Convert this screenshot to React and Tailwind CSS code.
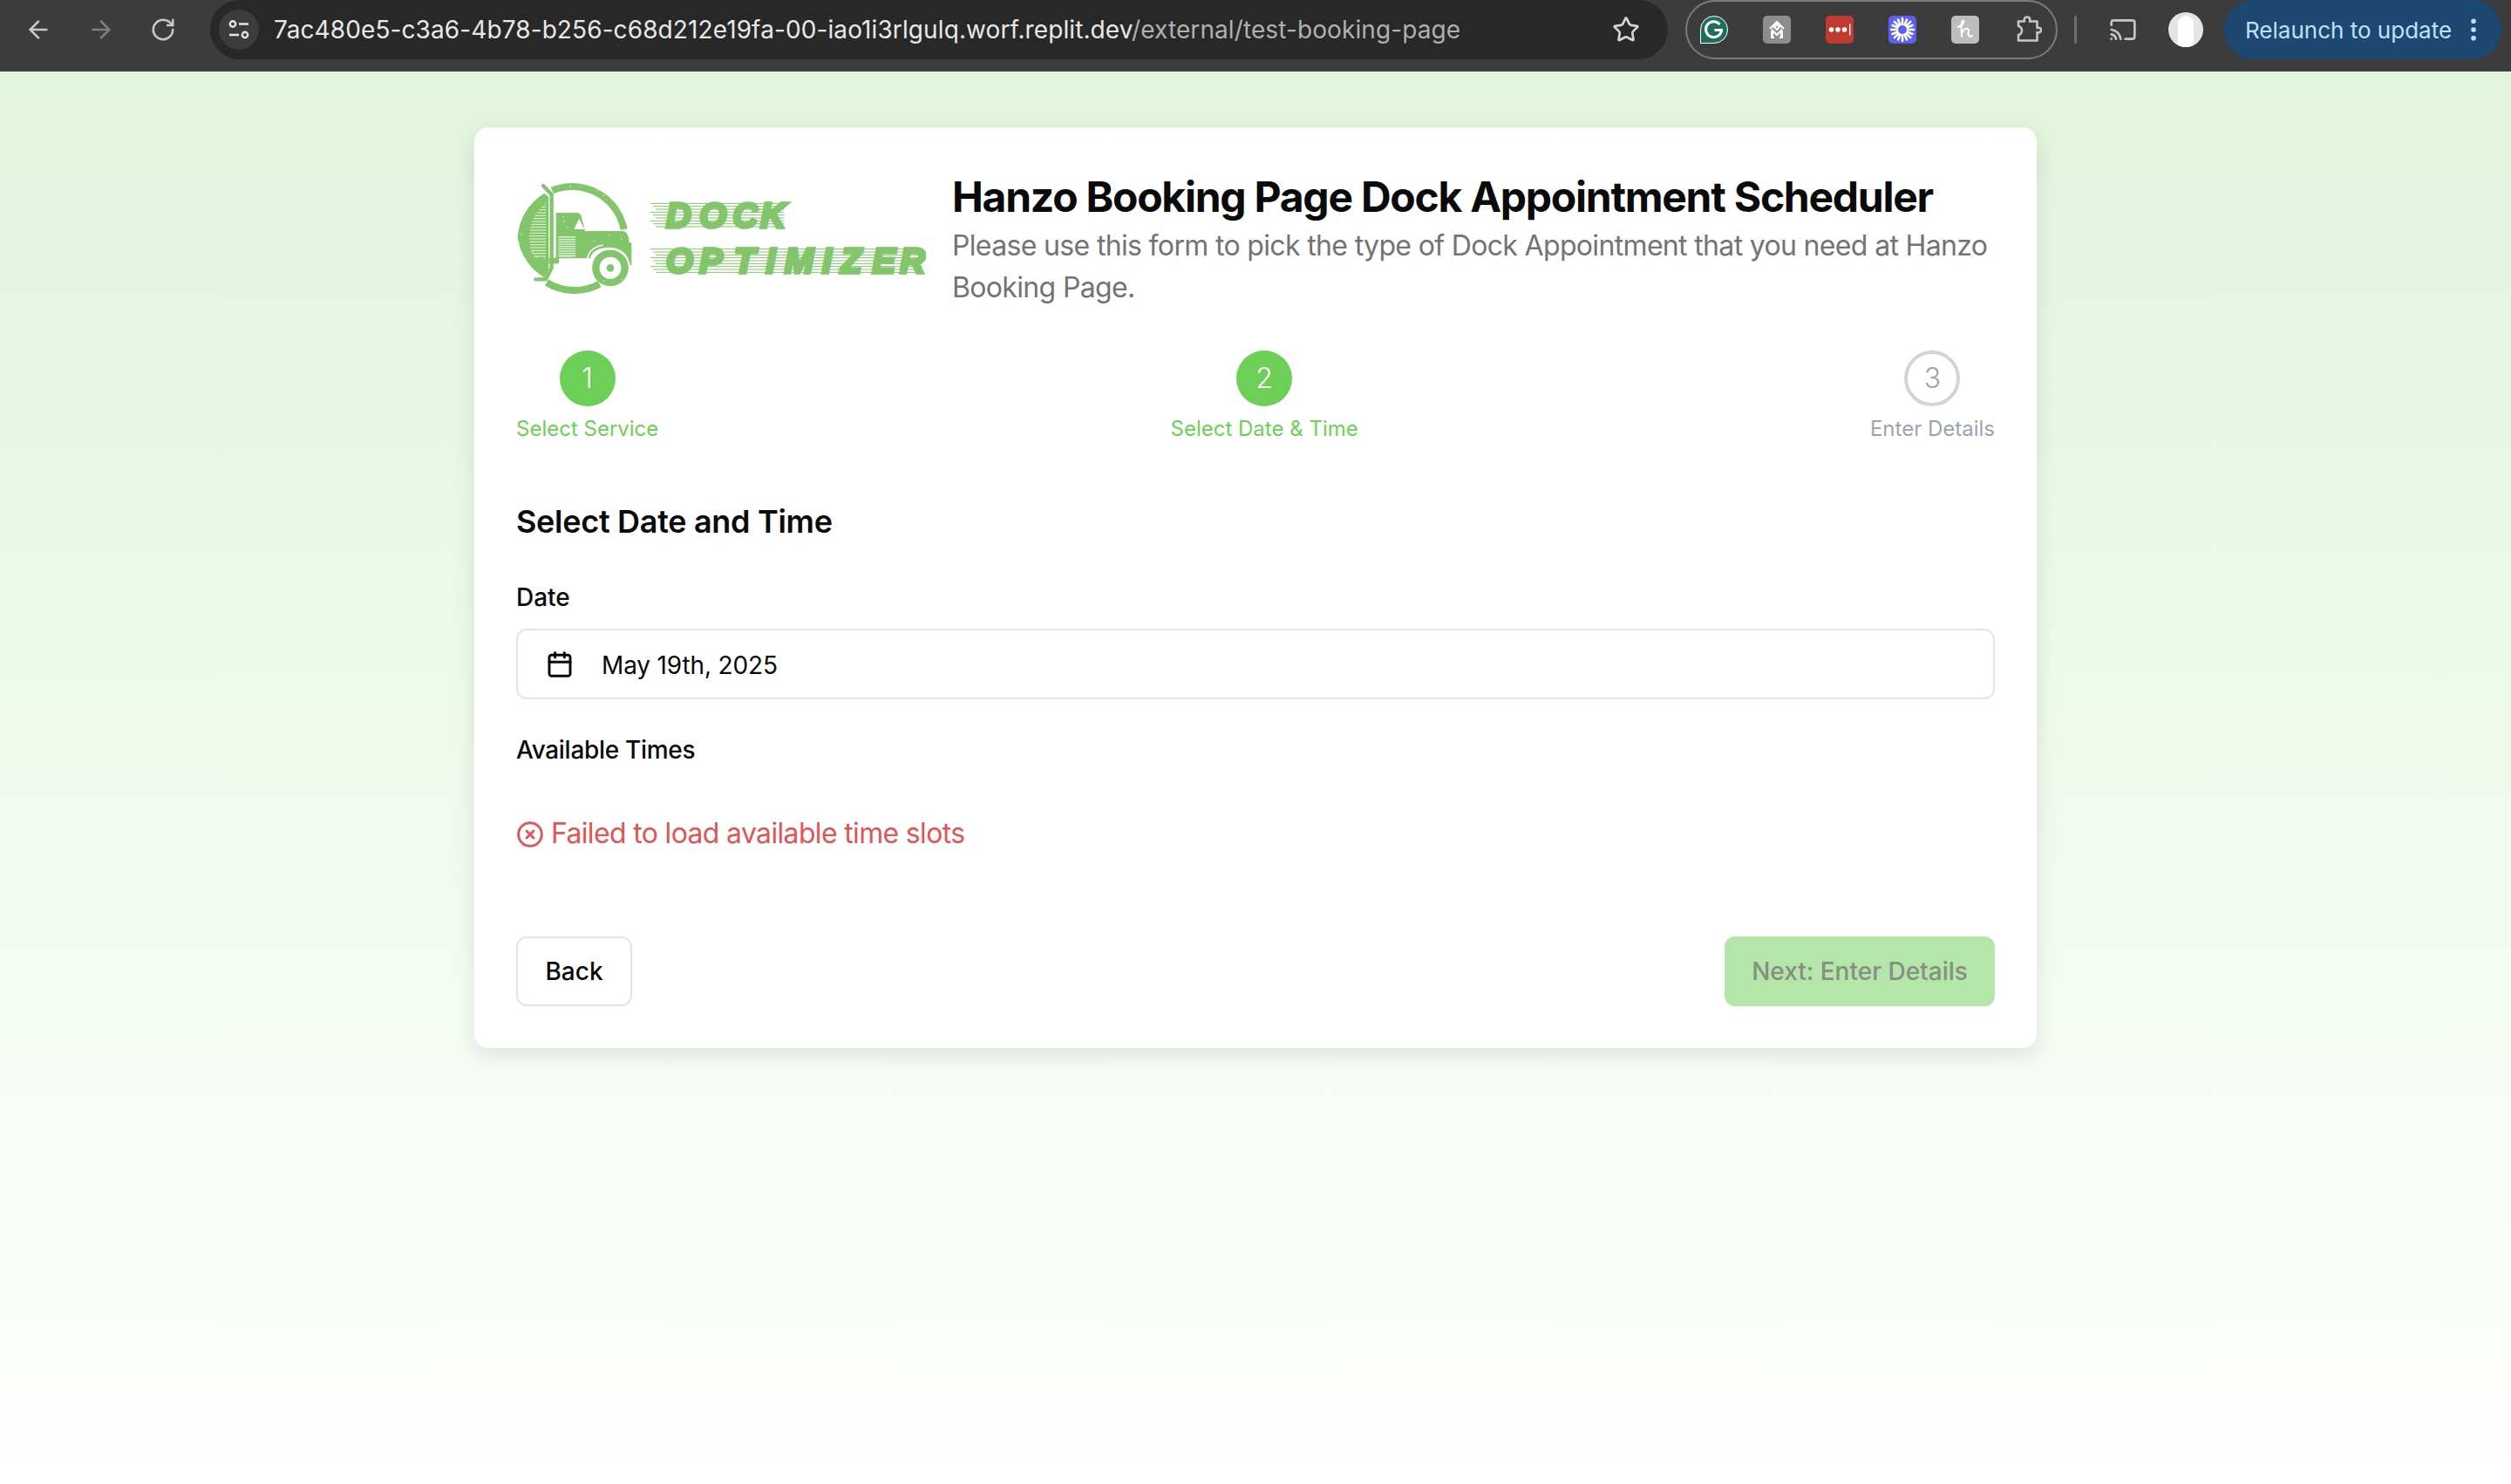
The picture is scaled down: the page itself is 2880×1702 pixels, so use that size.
import React from 'react';
import { ArrowLeft, ArrowRight, RotateCw, Star, Cast, Calendar, CircleX } from 'lucide-react';

const G = '#83c56a';

function Logo() {
  const dock = [578, 693, 808, 903];
  const opt = [578, 693, 812, 922, 986, 1115, 1178, 1288, 1383];
  const lines = [];
  for (let i = 0; i < 9; i++) {
    const ya = 133 + i * 10;
    const yb = 290 + i * 10;
    const o = (i % 3) * 9;
    lines.push(<path key={'a' + i} d={`M${525 + o} ${ya}H985`} stroke={G} strokeWidth="3" />);
    lines.push(<path key={'b' + i} d={`M${525 + o} ${yb}H1460`} stroke={G} strokeWidth="3" />);
  }
  const cuts = [];
  dock.forEach((x, k) => {
    for (let i = 0; i < 9; i += 1) cuts.push(<path key={`c${k}${i}`} d={`M${x - 6 - i} ${133 + i * 10 + 5}h${8 + (i % 2) * 6}`} stroke="#fff" strokeWidth="2" />);
  });
  opt.forEach((x, k) => {
    for (let i = 0; i < 9; i += 1) cuts.push(<path key={`d${k}${i}`} d={`M${x - 6 - i} ${290 + i * 10 + 5}h${8 + (i % 2) * 6}`} stroke="#fff" strokeWidth="2" />);
  });
  const bars = [];
  for (let y = 135; y < 320; y += 10) {
    const half = Math.sqrt(Math.max(0, 150 * 150 - (y - 250) * (y - 250)));
    bars.push(<path key={'l' + y} d={`M${Math.max(258 - half, 92)} ${y}H165`} stroke="#fff" strokeWidth="2.5" />);
  }
  const specks = [[250,75],[285,73],[345,88],[365,105],[96,322],[118,300],[135,318],[160,322],[228,195],[240,215],[330,262],[385,243],[425,255],[365,400],[425,395],[82,240],[75,270],[100,350],[225,180]];
  return (
    <svg viewBox="63 15 1410 480" className="w-[470px] h-[160px] shrink-0">
      <path d="M187 88A182 182 0 0 1 434 222" fill="none" stroke={G} strokeWidth="24" />
      <path d="M168 405A182 182 0 0 0 350 410" fill="none" stroke={G} strokeWidth="24" />
      <path d="M160 98A190 190 0 0 0 68 250A190 190 0 0 0 160 388L175 360V330H175V110Z" fill={G} />
      {bars}
      <path d="M156 72L185 102V355L165 394H130" fill="none" stroke={G} strokeWidth="13" strokeLinejoin="round" strokeLinecap="round" />
      <path d="M175 320H210V340H175Z" fill={G} />
      <path d="M200 165H272Q284 165 288 180L300 228H430Q450 230 452 268H460V345H455Q445 288 385 284Q325 286 318 322H200Z" fill={G} />
      <path d="M262 222L280 186L298 222Z" fill="#fff" />
      <path d="M209 247H266V316H209Z" fill="#fff" />
      <path d="M209 253H266M209 261H266M209 269H266M209 277H266M209 285H266M209 293H266M209 301H266M209 309H266" stroke={G} strokeWidth="5" />
      <path d="M308 328Q312 285 362 276" fill="none" stroke="#fff" strokeWidth="5" />
      <circle cx="387" cy="355" r="50" fill="#fff" stroke={G} strokeWidth="25" />
      <circle cx="387" cy="355" r="13" fill={G} />
      {specks.map(([x, y], i) => <circle key={i} cx={x} cy={y} r="2" fill="#fff" />)}
      {lines}
      <text x={dock.join(' ')} y="215" fill={G} stroke={G} strokeWidth="11" fontFamily="Liberation Sans, sans-serif" fontWeight="700" fontStyle="italic" fontSize="120">DOCK</text>
      <text x={opt.join(' ')} y="372" fill={G} stroke={G} strokeWidth="11" fontFamily="Liberation Sans, sans-serif" fontWeight="700" fontStyle="italic" fontSize="120">OPTIMIZER</text>
      {cuts}
    </svg>
  );
}

function Ext({ bg, children }) {
  return (
    <svg viewBox="0 0 32 32" className="w-8 h-8 shrink-0">
      <rect width="32" height="32" rx="5" fill={bg} />
      {children}
    </svg>
  );
}

function Chrome() {
  return (
    <div className="h-[82px] bg-[#3c3c3c] flex items-start text-[#c7c7c7] shrink-0">
      <div className="flex items-center w-[241px] h-[68px] pl-[28px] gap-[40px]">
        <ArrowLeft size={32} strokeWidth={2} />
        <ArrowRight size={32} strokeWidth={2} className="text-[#7f7f7f]" />
        <RotateCw size={30} strokeWidth={2} />
      </div>
      <div className="w-[1672px] h-[68px] rounded-[34px] bg-[#282828] flex items-center pl-[10px] pr-[32px]">
        <div className="w-[46px] h-[46px] rounded-full bg-[#3c3c3c] flex items-center justify-center">
          <svg viewBox="0 0 28 28" className="w-7 h-7" fill="none" stroke="#e3e3e3" strokeWidth="2.4">
            <circle cx="7" cy="7.5" r="3.2" />
            <path d="M14 7.5H25M3 20H14" />
            <circle cx="21" cy="20" r="3.2" />
          </svg>
        </div>
        <div className="ml-[17px] text-[28px] tracking-[0.1px] text-[#e8e8e8] whitespace-nowrap flex-1">7ac480e5-c3a6-4b78-b256-c68d212e19fa-00-iao1i3rlgulq.worf.replit.dev<span className="text-[#b0b0b0]">/external/test-booking-page</span></div>
        <Star size={32} strokeWidth={2} className="text-[#d5d5d5]" />
      </div>
      <div className="ml-[20px] w-[427px] h-[68px] rounded-[34px] border-2 border-[#7b7b7b] flex items-center justify-between pl-[15px] pr-[16px]">
        <svg viewBox="0 0 32 32" className="w-8 h-8 shrink-0">
          <path d="M16 0.5A15.5 15.5 0 0 1 16 31.5H0.5V16A15.5 15.5 0 0 1 16 0.5Z" fill="#1e6e5c" stroke="#fff" strokeWidth="1" />
          <path d="M22.5 10A9 9 0 1 0 24.5 16.5H16.5" fill="none" stroke="#fff" strokeWidth="3" />
        </svg>
        <Ext bg="#8d8d8d">
          <path d="M8 15L16 7L24 15M10 17V25H13M22 17V25H19M11 25V17L16 22L21 17V25M13 13L16 16L19 13L16 10Z" fill="none" stroke="#fff" strokeWidth="2" />
        </Ext>
        <Ext bg="#c13a30">
          <circle cx="6.5" cy="16" r="2.8" fill="#fff" /><circle cx="14" cy="16" r="2.8" fill="#fff" /><circle cx="21.5" cy="16" r="2.8" fill="#fff" />
          <rect x="27" y="9.5" width="1.4" height="13" fill="#fff" />
        </Ext>
        <Ext bg="#5c60ee">
          <g stroke="#fff" strokeWidth="2.6" strokeLinecap="round">
            <path d="M16 3V10M16 22V29M3 16H10M22 16H29M6.8 6.8L11.7 11.7M20.3 20.3L25.2 25.2M25.2 6.8L20.3 11.7M11.7 20.3L6.8 25.2M11 4.5L13.5 10.5M21 27.5L18.5 21.5M21 4.5L18.5 10.5M11 27.5L13.5 21.5M4.5 11L10.5 13.5M27.5 21L21.5 18.5M27.5 11L21.5 13.5M4.5 21L10.5 18.5" />
          </g>
          <circle cx="16" cy="16" r="3.5" fill="#5c60ee" />
        </Ext>
        <Ext bg="#bdbdbd">
          <path d="M8 13Q12 12 14 8Q15 5 13 6Q11 8 12 24M12 21Q14 15 18 15Q21 15 19.500 20Q19 25 24 23" fill="none" stroke="#fff" strokeWidth="2" strokeLinecap="round" />
        </Ext>
        <svg viewBox="0 0 32 32" className="w-8 h-8 shrink-0" fill="none" stroke="#c7c7c7" strokeWidth="2.6" strokeLinejoin="round">
          <path d="M5 6.500H12Q11 1.500 15 1.500Q19 1.500 18 6.500H26.500V14Q31 13 31 16.500Q31 20 26.500 19V28.500H5V22Q9 21 9 17Q9 13 5 12Z" />
        </svg>
      </div>
      <div className="w-[3px] h-[32px] bg-[#6f6f6f] ml-[19px] mt-[18px] rounded-full" />
      <Cast size={32} strokeWidth={2} className="ml-[37px] mt-[18px]" />
      <div className="ml-[36px] mt-[14px] w-[40px] h-[40px] rounded-full bg-[#e4e4e4] flex items-end justify-center overflow-hidden">
        <div className="w-[18px] h-[36px] rounded-t-full bg-white" />
      </div>
      <div className="ml-[24px] w-[318px] h-[68px] rounded-[34px] bg-[#1c4871] flex items-center pl-[24px] text-[#bfe0fa] text-[26px] whitespace-nowrap">
        <span className="w-[238px]">Relaunch to update</span>
        <svg viewBox="0 0 6 24" className="w-[8px] h-[26px] ml-[20px]" fill="#bfe0fa">
          <circle cx="3" cy="3" r="2.6" /><circle cx="3" cy="12" r="2.6" /><circle cx="3" cy="21" r="2.6" />
        </svg>
      </div>
    </div>
  );
}

function Step({ n, label, active }) {
  return (
    <div className="flex flex-col items-center">
      <div className={active
        ? 'w-16 h-16 rounded-full bg-[#6bd055] text-white flex items-center justify-center text-[32px] font-light'
        : 'w-16 h-16 rounded-full border-4 border-[#d1d5db] text-[#9ca3af] flex items-center justify-center text-[32px] font-light'}>{n}</div>
      <div className={'mt-[10px] text-[24px] leading-8 ' + (active ? 'text-[#6bd055]' : 'text-[#9ca3af]')}>{label}</div>
    </div>
  );
}

export default function App() {
  return (
    <div className="min-h-screen flex flex-col font-['Inter',sans-serif] text-[#0a0a0a]">
      <Chrome />
      <div className="flex-1 flex justify-center items-start pt-[64px] bg-gradient-to-b from-[#e0f5dc] to-white">
        <div className="w-[1792px] bg-white rounded-[16px] p-12 shadow-[0_8px_24px_rgba(0,0,0,0.1)]">
          <div className="flex items-start gap-[32px]">
            <Logo />
            <div className="-ml-[2px]">
              <h1 className="text-[48px] leading-16 font-bold tracking-[-1.25px]">Hanzo Booking Page Dock Appointment Scheduler</h1>
              <p className="text-[32px] leading-12 text-[#737373] tracking-[-0.66px]">Please use this form to pick the type of Dock Appointment that you need at Hanzo Booking Page.</p>
            </div>
          </div>
          <div className="mt-[48px] flex justify-between">
            <Step n="1" label="Select Service" active />
            <Step n="2" label="Select Date & Time" active />
            <Step n="3" label="Enter Details" />
          </div>
          <h2 className="mt-[62px] text-[36px] leading-14 font-semibold tracking-[-0.3px]">Select Date and Time</h2>
          <div className="mt-[39px] text-[28px] leading-10 font-medium">Date</div>
          <div className="mt-[16px] h-[81px] border-2 border-[#e5e5e5] rounded-[12px] flex items-center pl-[32px] text-[28px] tracking-[-0.15px]">
            <Calendar size={32} strokeWidth={2.2} />
            <span className="ml-[32px] translate-y-[1px]">May 19th, 2025</span>
          </div>
          <div className="mt-[38px] text-[28px] leading-10 font-medium tracking-[-0.3px]">Available Times</div>
          <div className="mt-[52px] flex items-center h-12 text-[32px] text-[#e05555] tracking-[-0.66px]">
            <CircleX size={32} strokeWidth={2.2} className="mt-[2px]" />
            <span className="ml-[8px]">Failed to load available time slots</span>
          </div>
          <div className="mt-[94px] flex justify-between">
            <button className="h-20 w-[133px] border-2 border-[#e5e5e5] rounded-[12px] text-[28px] font-medium">Back</button>
            <button className="h-20 w-[310px] bg-[#b3e6a8] text-[#858f82] rounded-[12px] text-[28px] font-medium">Next: Enter Details</button>
          </div>
        </div>
      </div>
    </div>
  );
}
